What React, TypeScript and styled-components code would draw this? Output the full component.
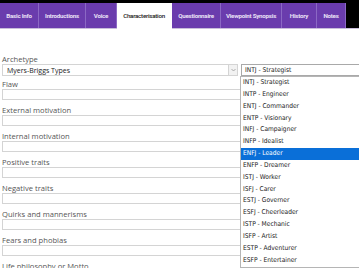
import styled, { createGlobalStyle } from "styled-components";

const GlobalStyle = createGlobalStyle`
  html, body {
    margin: 0;
    padding: 0;
    background: #fff;
    overflow: hidden;
    width: 359px;
    height: 268px;
  }
`;

const TabBar = styled.div`
  display: flex;
  background: #000;
  padding-top: 3px;
  height: 25px;
  border-bottom: 1px solid #c9bedb;
`;

const Tab = styled.div<{ $w: number; $active?: boolean }>`
  width: ${(p) => p.$w}px;
  flex: none;
  box-sizing: border-box;
  display: flex;
  align-items: center;
  justify-content: center;
  background: ${(p) => (p.$active ? "#fff" : "#6a3cad")};
  border-right: 1px solid ${(p) => (p.$active ? "#fff" : "#8b68c4")};
  color: ${(p) => (p.$active ? "#222" : "#e9e0f6")};
  font-family: Roboto, "Liberation Sans", sans-serif;
  font-size: 6.2px;
  font-weight: ${(p) => (p.$active ? 500 : 700)};
  letter-spacing: -0.25px;
  white-space: nowrap;
  margin-bottom: ${(p) => (p.$active ? "-1px" : "0")};
`;

const Form = styled.div`
  padding: 25px 2px 0 2px;
  font-family: "Open Sans", "Liberation Sans", sans-serif;
`;

const Field = styled.div<{ $gap?: number }>`
  margin-bottom: ${(p) => p.$gap ?? 5}px;
`;

const Label = styled.div`
  font-size: 7.6px;
  line-height: 10px;
  color: #555;
  white-space: nowrap;
`;

const Input = styled.div`
  box-sizing: border-box;
  height: 11px;
  width: 100%;
  border: 1px solid #d4d4d4;
  background: #fff;
`;

const SelectRow = styled.div`
  display: flex;
  gap: 3px;
  height: 12px;
  width: 400px;
`;

const TypeSelect = styled.div`
  box-sizing: border-box;
  width: 236px;
  flex: none;
  display: flex;
  align-items: center;
  border: 1px solid #d4d4d4;
  font-size: 7px;
  color: #222;
  padding-left: 4px;
`;

const SelectText = styled.span`
  flex: 1;
  white-space: nowrap;
`;

const ArrowBox = styled.div`
  width: 9px;
  height: 100%;
  box-sizing: border-box;
  border-left: 1px solid #d4d4d4;
  background: #f2f2f2;
  display: flex;
  align-items: center;
  justify-content: center;
`;

const ValueSelect = styled.div`
  position: relative;
  box-sizing: border-box;
  width: 140px;
  flex: none;
  border: 1px solid #a9a9a9;
  display: flex;
  align-items: center;
  padding-left: 3px;
  font-family: "DejaVu Sans Condensed", "DejaVu Sans", sans-serif;
  font-size: 6.6px;
  color: #222;
  white-space: nowrap;
`;

const List = styled.div`
  position: absolute;
  top: 11px;
  left: -2px;
  width: 150px;
  background: #fff;
  border: 1px solid #b5b5b5;
  z-index: 2;
`;

const Option = styled.div<{ $selected?: boolean }>`
  height: 11.85px;
  line-height: 11.85px;
  padding-left: 2px;
  background: ${(p) => (p.$selected ? "#0a6fd8" : "transparent")};
  color: ${(p) => (p.$selected ? "#fff" : "#222")};
`;

const tabs = [
  { label: "Basic Info", w: 39 },
  { label: "Introductions", w: 47 },
  { label: "Voice", w: 31 },
  { label: "Characterisation", w: 55, active: true },
  { label: "Questionnaire", w: 49 },
  { label: "Viewpoint Synopsis", w: 61 },
  { label: "History", w: 35 },
  { label: "Notes", w: 29 },
];

const options = [
  "INTJ - Strategist",
  "INTP - Engineer",
  "ENTJ - Commander",
  "ENTP - Visionary",
  "INFJ - Campaigner",
  "INFP - Idealist",
  "ENFJ - Leader",
  "ENFP - Dreamer",
  "ISTJ - Worker",
  "ISFJ - Carer",
  "ESTJ - Governer",
  "ESFJ - Cheerleader",
  "ISTP - Mechanic",
  "ISFP - Artist",
  "ESTP - Adventurer",
  "ESFP - Entertainer",
];

const fields = [
  "Flaw",
  "External motivation",
  "Internal motivation",
  "Positive traits",
  "Negative traits",
  "Quirks and mannerisms",
  "Fears and phobias",
  "Life philosophy or Motto",
];

function App() {
  return (
    <>
      <GlobalStyle />
      <TabBar>
        {tabs.map((t) => (
          <Tab key={t.label} $w={t.w} $active={t.active}>
            {t.label}
          </Tab>
        ))}
      </TabBar>
      <Form>
        <Field $gap={3}>
          <Label>Archetype</Label>
          <SelectRow>
            <TypeSelect>
              <SelectText>Myers-Briggs Types</SelectText>
              <ArrowBox>
                <svg width="5" height="4" viewBox="0 0 5 4">
                  <path d="M0.5 1 L2.5 3 L4.5 1" fill="none" stroke="#999" strokeWidth="0.8" />
                </svg>
              </ArrowBox>
            </TypeSelect>
            <ValueSelect>
              INTJ - Strategist
              <List>
                {options.map((o) => (
                  <Option key={o} $selected={o === "ENFJ - Leader"}>
                    {o}
                  </Option>
                ))}
              </List>
            </ValueSelect>
          </SelectRow>
        </Field>
        {fields.map((f) => (
          <Field key={f}>
            <Label>{f}</Label>
            <Input />
          </Field>
        ))}
      </Form>
    </>
  );
}

export default App;
